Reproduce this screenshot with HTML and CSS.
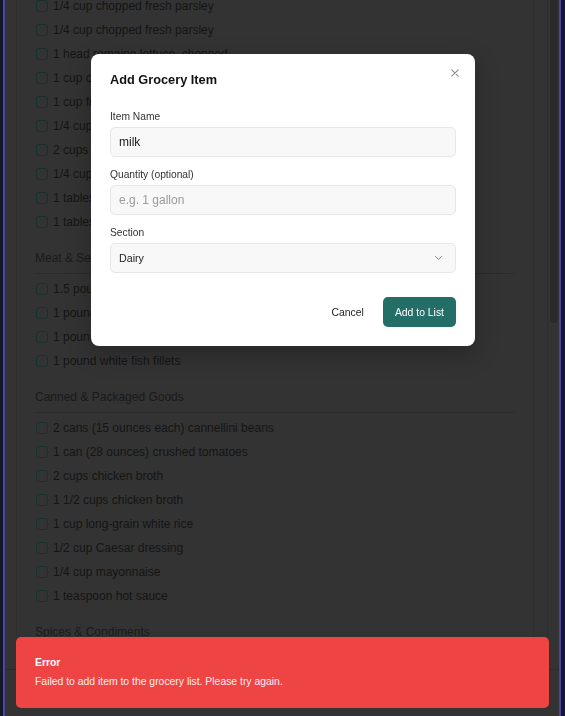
FILE: index.html
```html
<!DOCTYPE html>
<html lang="en">
<head>
<meta charset="utf-8">
<title>Grocery List</title>
<link rel="stylesheet" href="styles.css">
</head>
<body>
<div class="frame">
  <div class="main">
    <div class="scroller">
      <div class="card">
        <ul class="items">
          <li class="item"><span class="cb"></span>1/4 cup chopped fresh parsley</li>
          <li class="item"><span class="cb"></span>1/4 cup chopped fresh parsley</li>
          <li class="item"><span class="cb"></span>1 head romaine lettuce, chopped</li>
          <li class="item"><span class="cb"></span>1 cup cherry tomatoes, halved</li>
          <li class="item"><span class="cb"></span>1 cup fresh basil leaves</li>
          <li class="item"><span class="cb"></span>1/4 cup chopped red onion</li>
          <li class="item"><span class="cb"></span>2 cups baby spinach</li>
          <li class="item"><span class="cb"></span>1/4 cup grated carrots</li>
          <li class="item"><span class="cb"></span>1 tablespoon fresh lemon juice</li>
          <li class="item"><span class="cb"></span>1 tablespoon chopped fresh dill</li>
        </ul>
        <h3 class="section-title">Meat &amp; Seafood</h3>
        <ul class="items">
          <li class="item"><span class="cb"></span>1.5 pounds boneless chicken thighs</li>
          <li class="item"><span class="cb"></span>1 pound ground beef</li>
          <li class="item"><span class="cb"></span>1 pound large shrimp, peeled</li>
          <li class="item"><span class="cb"></span>1 pound white fish fillets</li>
        </ul>
        <h3 class="section-title">Canned &amp; Packaged Goods</h3>
        <ul class="items">
          <li class="item"><span class="cb"></span>2 cans (15 ounces each) cannellini beans</li>
          <li class="item"><span class="cb"></span>1 can (28 ounces) crushed tomatoes</li>
          <li class="item"><span class="cb"></span>2 cups chicken broth</li>
          <li class="item"><span class="cb"></span>1 1/2 cups chicken broth</li>
          <li class="item"><span class="cb"></span>1 cup long-grain white rice</li>
          <li class="item"><span class="cb"></span>1/2 cup Caesar dressing</li>
          <li class="item"><span class="cb"></span>1/4 cup mayonnaise</li>
          <li class="item"><span class="cb"></span>1 teaspoon hot sauce</li>
        </ul>
        <h3 class="section-title">Spices &amp; Condiments</h3>
        <ul class="items">
          <li class="item"><span class="cb"></span>1 teaspoon dried oregano</li>
          <li class="item"><span class="cb"></span>Salt and pepper to taste</li>
        </ul>
      </div>
    </div>
    <div class="track"><div class="thumb"></div></div>
  </div>
  <div class="bottom"></div>
</div>

<div class="modal" role="dialog" aria-label="Add Grocery Item">
  <h2 class="modal-title">Add Grocery Item</h2>
  <svg class="close" width="8" height="8" viewBox="0 0 8 8" aria-hidden="true">
    <path d="M0.8 0.8 L7.2 7.2 M7.2 0.8 L0.8 7.2" stroke="#8c8c8c" stroke-width="1.1" fill="none" stroke-linecap="round"/>
  </svg>
  <div class="fields">
    <div class="field">
      <label class="label" for="name">Item Name</label>
      <input class="input" id="name" type="text" value="milk">
    </div>
    <div class="field">
      <label class="label" for="qty">Quantity (optional)</label>
      <input class="input" id="qty" type="text" placeholder="e.g. 1 gallon">
    </div>
    <div class="field">
      <span class="label">Section</span>
      <div class="select">
        <span>Dairy</span>
        <svg width="7" height="4" viewBox="0 0 7 4" aria-hidden="true">
          <path d="M0.5 0.5 L3.5 3.3 L6.5 0.5" stroke="#777" stroke-width="0.9" fill="none" stroke-linecap="round" stroke-linejoin="round"/>
        </svg>
      </div>
    </div>
  </div>
  <div class="actions">
    <button class="btn btn-ghost" type="button">Cancel</button>
    <button class="btn btn-primary" type="button">Add to List</button>
  </div>
</div>

<div class="toast" role="alert">
  <div class="toast-title">Error</div>
  <div class="toast-msg">Failed to add item to the grocery list. Please try again.</div>
</div>
</body>
</html>
```

FILE: styles.css
```css
html, body {
  margin: 0;
  height: 716px;
  overflow: hidden;
}

body {
  background: #15172c;
  font-family: "Liberation Sans", Arial, sans-serif;
}

.frame {
  margin: 0 4px 0 3px;
  height: 716px;
  border-left: 2px solid #4b45a3;
  border-right: 2px solid #4b45a3;
  background: #333333;
  display: flex;
  flex-direction: column;
}

.main {
  flex: 1;
  min-height: 0;
  display: flex;
  overflow: hidden;
}

.scroller {
  flex: 1;
  padding: 0 13px 0 11px;
  overflow: hidden;
}

.card {
  margin-top: -6px;
  padding: 0 18px;
  border-left: 1px solid #2e2e2e;
  border-right: 1px solid #2e2e2e;
  min-height: 720px;
}

.items {
  list-style: none;
  margin: 0;
  padding: 0;
}

.item {
  display: flex;
  align-items: center;
  gap: 5px;
  height: 24px;
  font-size: 12px;
  color: #151515;
  white-space: nowrap;
}

.cb {
  flex: none;
  width: 12px;
  height: 12px;
  box-sizing: border-box;
  margin-left: 1px;
  border: 1px solid #16322e;
  border-radius: 3px;
}

.section-title {
  margin: 16px 0 3px;
  padding-bottom: 7px;
  border-bottom: 1px solid #2b2b2b;
  font-size: 12px;
  line-height: 16px;
  font-weight: 400;
  color: #1a1a1a;
}

.track {
  width: 12px;
  box-sizing: border-box;
  border-left: 1px solid #2e2e2e;
  padding-left: 2px;
}

.thumb {
  width: 8px;
  height: 323px;
  background: #2a2a2a;
  border-radius: 0 0 4px 4px;
}

.bottom {
  height: 46px;
  border-top: 1px solid #2b2b2b;
}

/* Modal */
.modal {
  position: fixed;
  top: 54px;
  left: 91px;
  width: 384px;
  box-sizing: border-box;
  padding: 18px 19px 19px;
  background: #ffffff;
  border-radius: 8px;
  box-shadow: 0 8px 24px rgba(0, 0, 0, 0.25);
}

.modal-title {
  margin: 0;
  font-size: 12.75px;
  line-height: 16px;
  font-weight: 700;
  color: #111111;
}

.close {
  position: absolute;
  top: 15px;
  right: 16px;
}

.fields {
  margin-top: 22px;
  display: flex;
  flex-direction: column;
  gap: 11px;
}

.label {
  display: block;
  margin-bottom: 3px;
  font-size: 10.25px;
  line-height: 14px;
  color: #333333;
}

.input,
.select {
  display: flex;
  align-items: center;
  width: 100%;
  height: 30px;
  box-sizing: border-box;
  margin: 0;
  padding: 0 8px;
  border: 1px solid #e7e7e7;
  border-radius: 5px;
  background: #f8f8f8;
  font-family: inherit;
  color: #1a1a1a;
  outline: none;
}

.input {
  font-size: 12px;
}

.input::placeholder {
  color: #9a9a9a;
}

.select {
  justify-content: space-between;
  padding-right: 13px;
  font-size: 10.7px;
  color: #222222;
}

.actions {
  margin-top: 24px;
  display: flex;
  justify-content: flex-end;
  gap: 7px;
}

.btn {
  height: 30px;
  padding: 0 12px;
  border: none;
  border-radius: 5px;
  font-family: inherit;
  font-size: 10.4px;
  cursor: pointer;
}

.btn-ghost {
  background: transparent;
  color: #222222;
}

.btn-primary {
  background: #236e66;
  color: #ffffff;
}

/* Toast */
.toast {
  position: fixed;
  left: 16px;
  right: 16px;
  bottom: 8px;
  padding: 19px;
  background: #ef4444;
  border-radius: 5px;
  color: #ffffff;
}

.toast-title {
  font-size: 10.4px;
  line-height: 14px;
  font-weight: 700;
}

.toast-msg {
  margin-top: 5px;
  font-size: 10.4px;
  line-height: 14px;
  opacity: 0.92;
}
```
